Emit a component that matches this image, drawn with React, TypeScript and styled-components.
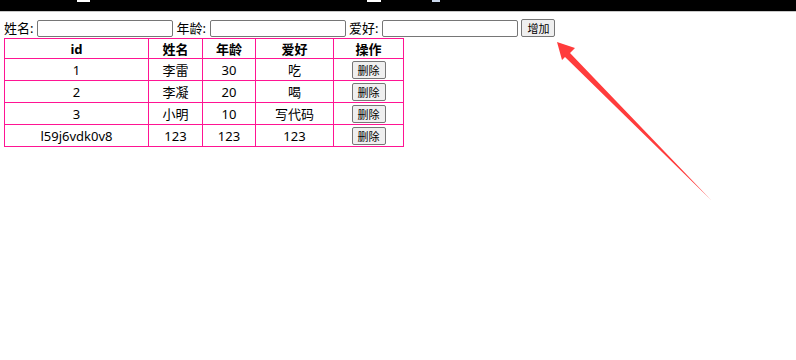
import styled, { createGlobalStyle } from "styled-components";

const GlobalStyle = createGlobalStyle`
  html, body {
    margin: 0;
    padding: 0;
    background: #ffffff;
    font-family: "Noto Sans", "Noto Sans CJK SC", sans-serif;
    font-size: 13px;
    color: #000000;
  }
`;

const Page = styled.div`
  position: relative;
  width: 796px;
  height: 360px;
  overflow: hidden;
`;

const TopBar = styled.div`
  position: relative;
  height: 11px;
  background: #000000;
  border-bottom: 1px solid #c8c8c8;
`;

interface MarkProps {
  $left: number;
  $width: number;
  $color?: string;
}

const Mark = styled.span<MarkProps>`
  position: absolute;
  top: 0;
  left: ${(p) => p.$left}px;
  width: ${(p) => p.$width}px;
  height: 2px;
  background: ${(p) => p.$color || "#ffffff"};
`;

const Content = styled.div`
  padding: 7px 4px 0;
`;

const Form = styled.div`
  display: flex;
  align-items: center;
  height: 18px;
  margin-bottom: 1px;
`;

const Label = styled.label`
  line-height: 17px;
  margin-right: 4px;
`;

const Input = styled.input`
  box-sizing: border-box;
  width: 136px;
  height: 17px;
  margin: 0 3px 0 0;
  border: 1px solid #767676;
  border-radius: 2px;
  padding: 0 2px;
  background: #ffffff;
`;

const Button = styled.button`
  box-sizing: border-box;
  height: 18px;
  padding: 0 5px;
  border: 1px solid #767676;
  border-radius: 2px;
  background: #efefef;
  font-family: "Noto Sans CJK SC", sans-serif;
  font-size: 11px;
  line-height: 14px;
  color: #000000;
`;

const Table = styled.table`
  border-collapse: collapse;
  border: 1px solid #ff1493;
  width: 400px;
  font-family: "Noto Sans", "Noto Sans CJK SC", sans-serif;
  font-size: 13px;
`;

interface CellProps {
  $width?: number;
}

const Th = styled.th<CellProps>`
  border: 1px solid #ff1493;
  height: 18px;
  padding: 0;
  font-weight: bold;
  text-align: center;
  width: ${(p) => (p.$width ? `${p.$width}px` : "auto")};
`;

const Td = styled.td`
  border: 1px solid #ff1493;
  height: 21px;
  padding: 0;
  text-align: center;
`;

const Arrow = styled.svg`
  position: absolute;
  left: 0;
  top: 0;
`;

const rows = [
  { id: "1", name: "李雷", age: "30", hobby: "吃" },
  { id: "2", name: "李凝", age: "20", hobby: "喝" },
  { id: "3", name: "小明", age: "10", hobby: "写代码" },
  { id: "l59j6vdk0v8", name: "123", age: "123", hobby: "123" },
];

export default function App() {
  return (
    <Page>
      <GlobalStyle />
      <TopBar>
        <Mark $left={77} $width={13} />
        <Mark $left={367} $width={14} />
        <Mark $left={432} $width={8} $color="#c9d6ea" />
      </TopBar>
      <Content>
        <Form>
          <Label>姓名:</Label>
          <Input />
          <Label>年龄:</Label>
          <Input />
          <Label>爱好:</Label>
          <Input />
          <Button>增加</Button>
        </Form>
        <Table>
          <thead>
            <tr>
              <Th $width={143}>id</Th>
              <Th $width={53}>姓名</Th>
              <Th $width={52}>年龄</Th>
              <Th $width={77}>爱好</Th>
              <Th>操作</Th>
            </tr>
          </thead>
          <tbody>
            {rows.map((r) => (
              <tr key={r.id}>
                <Td>{r.id}</Td>
                <Td>{r.name}</Td>
                <Td>{r.age}</Td>
                <Td>{r.hobby}</Td>
                <Td>
                  <Button>删除</Button>
                </Td>
              </tr>
            ))}
          </tbody>
        </Table>
      </Content>
      <Arrow width="796" height="360" viewBox="0 0 796 360">
        <polygon
          points="557,42 575,48 570,53 711,200 565,57 562,60"
          fill="#ff3c3c"
        />
      </Arrow>
    </Page>
  );
}
